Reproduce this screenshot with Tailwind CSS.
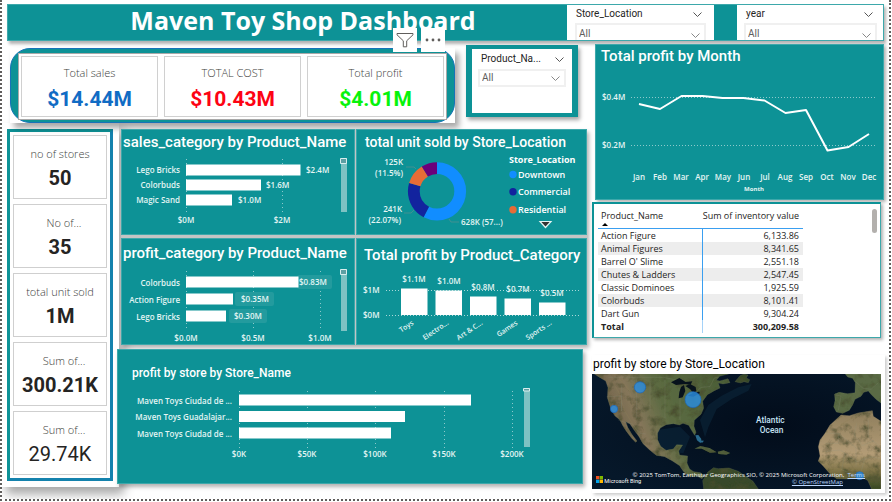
<!DOCTYPE html>
<html lang="en">
<head>
<meta charset="utf-8">
<meta name="viewport" content="width=device-width, initial-scale=1">
<title>Maven Toy Shop Dashboard</title>
<script src="https://cdn.jsdelivr.net/npm/@tailwindcss/browser@4"></script>
</head>
<body class="bg-white font-['Open_Sans','Noto_Sans',sans-serif] text-[#252423]">
<div class="mr-px overflow-hidden border-x-2 border-b-2 border-dotted border-[#605e5c] pt-1 pr-[5px] pb-[6px] pl-[5px]">

  <header class="grid h-[37px] grid-cols-[560fr_147fr_23fr_147fr] bg-[#0d9296] shadow-[2px_3px_3px_rgba(0,0,0,0.3)] outline outline-1 -outline-offset-1 outline-[#3da8ab]">
    <h1 class="min-w-0 truncate pl-[32px] text-center text-[25px] leading-8 font-bold text-white">Maven Toy Shop Dashboard</h1>
    <section class="min-w-0 overflow-hidden border-b border-[#9fd2d3] bg-white px-2 pt-[2px]">
      <div class="flex h-4 items-center justify-between pr-1 pl-px">
        <label for="loc" class="font-['Roboto',sans-serif] text-[10px] leading-4">Store_Location</label>
        <button type="button" aria-label="Clear Store_Location"><svg class="h-[5px] w-[9px]" viewBox="0 0 9 5" fill="none" stroke="#555" stroke-width="1"><path d="M.5.5l4 4 4-4"/></svg></button>
      </div>
      <div class="relative mt-[1px] h-5 border-2 border-b-0 border-[#f0f0f0]">
        <select id="loc" class="block h-[18px] w-full appearance-none pl-[2px] font-['Roboto',sans-serif] text-[10px] leading-[18px] text-[#605e5c]"><option>All</option></select>
        <svg class="pointer-events-none absolute top-2 right-1 h-[5px] w-[9px]" viewBox="0 0 9 5" fill="none" stroke="#888"><path d="M.5.5l4 4 4-4"/></svg>
      </div>
    </section>
    <div></div>
    <section class="min-w-0 overflow-hidden border-b border-[#9fd2d3] bg-white px-[7px] pt-[2px]">
      <div class="flex h-4 items-center justify-between pr-1 pl-[2px]">
        <label for="year" class="font-['Roboto',sans-serif] text-[10px] leading-4">year</label>
        <button type="button" aria-label="Clear year"><svg class="h-[5px] w-[9px]" viewBox="0 0 9 5" fill="none" stroke="#555" stroke-width="1"><path d="M.5.5l4 4 4-4"/></svg></button>
      </div>
      <div class="relative mt-[1px] h-5 border-2 border-b-0 border-[#f0f0f0]">
        <select id="year" class="block h-[18px] w-full appearance-none pl-[2px] font-['Roboto',sans-serif] text-[10px] leading-[18px] text-[#605e5c]"><option>All</option></select>
        <svg class="pointer-events-none absolute top-2 right-1 h-[5px] w-[9px]" viewBox="0 0 9 5" fill="none" stroke="#888"><path d="M.5.5l4 4 4-4"/></svg>
      </div>
    </section>
  </header>

  <main class="grid grid-cols-[580fr_292fr] gap-x-[5px] pt-[3px]">
    <div class="flex min-w-0 flex-col gap-[6px]">
      <div class="grid grid-cols-[445fr_112fr] items-start gap-[11px] pr-[9px] pl-[3px]">
        <section class="relative mt-1 min-w-0 bg-white shadow-[4px_5px_6px_rgba(0,0,0,0.35)]">
          <div class="rounded-[20px] border border-[#1773b8] bg-[#0d9296] px-[7px] pt-1 pb-[2px]">
            <div class="grid grid-cols-3 gap-[6px] border border-[#a9a9a9] bg-white px-[2px] py-[2px]">
              <div class="flex h-[61px] flex-col items-center border border-[#d0d0d0] pt-2"><span class="text-[11px] leading-4 font-light text-[#403e3c]">Total sales</span><span class="mt-[6px] font-['Roboto',sans-serif] text-[21px] leading-6 font-bold text-[#116cc4]">$14.44M</span></div>
              <div class="flex h-[61px] flex-col items-center border border-[#d0d0d0] pt-2"><span class="text-[11px] leading-4 font-light text-[#403e3c]">TOTAL COST</span><span class="mt-[6px] font-['Roboto',sans-serif] text-[21px] leading-6 font-bold text-[#fd0313]">$10.43M</span></div>
              <div class="flex h-[61px] flex-col items-center border border-[#d0d0d0] pt-2"><span class="text-[11px] leading-4 font-light text-[#403e3c]">Total profit</span><span class="mt-[6px] font-['Roboto',sans-serif] text-[21px] leading-6 font-bold text-[#07f30b]">$4.01M</span></div>
            </div>
          </div>
          <div class="absolute -top-[20px] right-[10px] flex gap-1">
            <button type="button" aria-label="Filters" class="flex h-6 w-6 items-center justify-center bg-white"><svg class="h-4 w-[18px]" viewBox="0 0 18 16" fill="none" stroke="#605e5c"><path d="M1 1.500h16v1.300l-6.300 6v6H7.300v-6L1 2.800z"/></svg></button>
            <button type="button" aria-label="More options" class="flex h-6 w-6 items-center justify-center bg-white"><svg class="h-1 w-4" viewBox="0 0 16 4" fill="#605e5c"><circle cx="2" cy="2" r="1.400"/><circle cx="8" cy="2" r="1.400"/><circle cx="14" cy="2" r="1.400"/></svg></button>
          </div>
        </section>
        <section class="mt-px min-w-0 border-x-[6px] border-y-4 border-[#0d9296] bg-white px-[6px] pt-[2px] pb-[26px] shadow-[2px_3px_4px_rgba(0,0,0,0.35)]">
          <div class="flex h-4 items-center justify-between pr-[2px] pl-[3px]">
            <label for="prod" class="font-['Roboto',sans-serif] text-[10px] leading-4">Product_Na...</label>
            <button type="button" aria-label="Clear Product_Name"><svg class="h-[5px] w-[9px]" viewBox="0 0 9 5" fill="none" stroke="#555"><path d="M.5.5l4 4 4-4"/></svg></button>
          </div>
          <div class="relative mt-[2px] h-[18px] border-2 border-[#f0f0f0]">
            <select id="prod" class="block h-[14px] w-full appearance-none pl-[2px] font-['Roboto',sans-serif] text-[10px] leading-[14px] text-[#605e5c]"><option>All</option></select>
            <svg class="pointer-events-none absolute top-[5px] right-1 h-[5px] w-[9px]" viewBox="0 0 9 5" fill="none" stroke="#888"><path d="M.5.5l4 4 4-4"/></svg>
          </div>
        </section>
      </div>

      <div class="grid grid-cols-[106fr_470fr] items-start gap-1">
        <aside class="flex min-w-0 flex-col gap-[5px] border-[3px] border-t-[#0d9296] border-r-[#1482ad] border-b-[#1482ad] border-l-[#0d9296] bg-white px-[3px] pt-[3px] pb-[3px] shadow-[0_0_0_6px_#fff,5px_7px_10px_6px_rgba(0,0,0,0.35)]">
          <div class="flex h-16 flex-col items-center border border-[#cfcfcf] pt-[10px]"><span class="text-[11px] leading-4 font-light text-[#403e3c]">no of stores</span><span class="mt-1 font-['Roboto',sans-serif] text-[20px] leading-6 font-bold">50</span></div>
          <div class="flex h-16 flex-col items-center border border-[#cfcfcf] pt-[10px]"><span class="pl-2 text-[11px] leading-4 font-light text-[#403e3c]">No of...</span><span class="mt-1 font-['Roboto',sans-serif] text-[20px] leading-6 font-bold">35</span></div>
          <div class="flex h-16 flex-col items-center border border-[#cfcfcf] pt-[10px]"><span class="text-[11px] leading-4 font-light text-[#403e3c]">total unit sold</span><span class="mt-1 font-['Roboto',sans-serif] text-[20px] leading-6 font-bold">1M</span></div>
          <div class="flex h-16 flex-col items-center border border-[#cfcfcf] pt-[10px]"><span class="pl-2 text-[11px] leading-4 font-light text-[#403e3c]">Sum of...</span><span class="mt-1 font-['Roboto',sans-serif] text-[20px] leading-6 font-bold">300.21K</span></div>
          <div class="flex h-16 flex-col items-center border border-[#cfcfcf] pt-[10px]"><span class="pl-2 text-[11px] leading-4 font-light text-[#403e3c]">Sum of...</span><span class="mt-1 font-['Roboto',sans-serif] text-[20px] leading-6">29.74K</span></div>
        </aside>

        <div class="relative flex min-w-0 flex-col gap-1">
          <div class="ml-1 grid grid-cols-[234fr_231fr] gap-x-px gap-y-[3px] bg-[#c4c4c4] shadow-[2px_3px_4px_rgba(0,0,0,0.3)]">
            <section class="min-w-0 bg-[#0d9296] outline outline-1 -outline-offset-1 outline-[#3da8ab]">
              <h2 class="h-[26px] truncate pt-[3px] pl-[2px] font-['Roboto',sans-serif] text-[15px] leading-5 font-medium text-white">sales_category by Product_Name</h2>
              <svg class="block w-full font-['Open_Sans','Noto_Sans',sans-serif] text-[8px] font-semibold" viewBox="121 155 234 80" fill="#e4f5f4">
                <g stroke="#8cc9cb" stroke-dasharray="1 3"><path d="M186.500 159v54M282.500 159v54"/></g>
                <g fill="#fff"><path d="M186 164.500h114.500v11H186zM186 179.500h75v11h-75zM186 194.500h46v11h-46z"/></g>
                <g text-anchor="end"><text x="180" y="173">Lego Bricks</text><text x="180" y="188">Colorbuds</text><text x="180" y="203">Magic Sand</text></g>
                <text x="306" y="173">$2.4M</text><text x="266" y="188">$1.6M</text><text x="238" y="203">$1.0M</text>
                <g text-anchor="middle"><text x="186" y="223">$0M</text><text x="282" y="223">$2M</text></g>
                <path fill="#7ec2c3" d="M341 158h6v54h-6z"/><path fill="#5d9fa3" stroke="#d8eeee" d="M340.500 158.500h6v5h-6z"/>
              </svg>
            </section>
            <section class="min-w-0 bg-[#0d9296] outline outline-1 -outline-offset-1 outline-[#3da8ab]">
              <h2 class="h-[26px] truncate pt-[3px] pl-[9px] font-['Roboto',sans-serif] text-[14px] leading-5 font-medium text-white">total unit sold by Store_Location</h2>
              <svg class="block w-full font-['Open_Sans','Noto_Sans',sans-serif] text-[8px] font-semibold" viewBox="356 155 231 80" fill="#e4f5f4">
                <g fill="none" stroke-width="11.800" transform="rotate(-90 437 191.300)">
                  <circle cx="437" cy="191.300" r="23.200" pathLength="100" stroke="#118dff" stroke-dasharray="57.650 100"/>
                  <circle cx="437" cy="191.300" r="23.200" pathLength="100" stroke="#12239e" stroke-dasharray="22.070 100" stroke-dashoffset="-57.650"/>
                  <circle cx="437" cy="191.300" r="23.200" pathLength="100" stroke="#e66c37" stroke-dasharray="11.500 100" stroke-dashoffset="-79.720"/>
                  <circle cx="437" cy="191.300" r="23.200" pathLength="100" stroke="#6b007b" stroke-dasharray="8.780 100" stroke-dashoffset="-91.220"/>
                </g>
                <path fill="none" stroke="#5a8f90" stroke-width=".7" d="M406 167h8l2 2M404 213h7l3-3M449 219l2 3h8"/>
                <g text-anchor="end"><text x="403" y="165">125K</text><text x="403" y="176">(11.5%)</text><text x="402" y="212">241K</text><text x="401" y="223">(22.07%)</text></g>
                <text x="461" y="225">628K (57...)</text>
                <g class="text-[9px]" fill="#fff"><text x="509" y="163" class="font-bold">Store_Location</text><text x="518" y="178">Downtown</text><text x="518" y="195">Commercial</text><text x="518" y="213">Residential</text></g>
                <circle cx="513" cy="174.500" r="3.700" fill="#118dff"/><circle cx="513" cy="191.700" r="3.700" fill="#12239e"/><circle cx="513" cy="209.700" r="3.700" fill="#e66c37"/>
                <path d="M540 221.500h11l-5.500 6z" fill="#333" stroke="#e4f5f4" stroke-width="1.200"/>
              </svg>
            </section>
            <section class="min-w-0 bg-[#0d9296] outline outline-1 -outline-offset-1 outline-[#3da8ab]">
              <h2 class="h-[27px] truncate pt-[5px] pl-[2px] font-['Roboto',sans-serif] text-[15px] leading-5 font-medium text-white">profit_category by Product_Name</h2>
              <svg class="block w-full font-['Open_Sans','Noto_Sans',sans-serif] text-[8px] font-semibold" viewBox="121 265 234 80" fill="#e4f5f4">
                <g stroke="#8cc9cb" stroke-dasharray="1 3"><path d="M186.500 271v60M253.500 271v60M320.500 271v60"/></g>
                <g fill="#239b9e"><rect x="297" y="275" width="35" height="14" rx="2"/><rect x="235" y="292" width="39" height="14" rx="2"/><rect x="229" y="309" width="38" height="14" rx="2"/></g>
                <g fill="#fff"><path d="M186 276.500h112.500v11H186zM186 293.500h47v11h-47zM186 310.500h40v11h-40z"/></g>
                <g text-anchor="end"><text x="180" y="286">Colorbuds</text><text x="180" y="303">Action Figure</text><text x="180" y="320">Lego Bricks</text></g>
                <text x="299" y="285">$0.83M</text><text x="241" y="302">$0.35M</text><text x="234" y="319">$0.30M</text>
                <g text-anchor="middle"><text x="186" y="341">$0.0M</text><text x="253" y="341">$0.5M</text><text x="320" y="341">$1.0M</text></g>
                <path fill="#7ec2c3" d="M341 269h6v62h-6z"/><path fill="#5d9fa3" stroke="#d8eeee" d="M340.500 269.500h6v5h-6z"/>
              </svg>
            </section>
            <section class="min-w-0 bg-[#0d9296] outline outline-1 -outline-offset-1 outline-[#3da8ab]">
              <h2 class="h-[27px] truncate pt-[7px] pl-[8px] font-['Roboto',sans-serif] text-[15px] leading-5 font-medium text-white">Total profit by Product_Category</h2>
              <svg class="block w-full font-['Open_Sans','Noto_Sans',sans-serif] text-[8px] font-semibold" viewBox="356 265 231 80" fill="#e4f5f4">
                <g stroke="#a9d8d9" stroke-dasharray="1 2"><path d="M386 290.500h193M386 315.500h193"/></g>
                <path fill="#fff" d="M401 288.500h26.500V315H401zM435.500 290.500H462V315h-26.500zM470 296.500h26.500V315H470zM504.500 298.500H531V315h-26.500zM539 302.500h26.500V315H539z"/>
                <text x="363" y="293">$1M</text><text x="363" y="318">$0M</text>
                <g text-anchor="middle"><text x="414" y="282">$1.1M</text><text x="449" y="284">$1.0M</text><text x="483" y="290">$0.8M</text><text x="518" y="292">$0.7M</text><text x="552" y="296">$0.5M</text></g>
                <g text-anchor="end" class="text-[7px]"><text transform="translate(414 324) rotate(-34)">Toys</text><text transform="translate(449 324) rotate(-34)">Electro...</text><text transform="translate(483 324) rotate(-34)">Art &amp; C...</text><text transform="translate(518 324) rotate(-34)">Games</text><text transform="translate(552 324) rotate(-34)">Sports ...</text></g>
              </svg>
            </section>
          </div>
          <section class="mr-1 bg-[#0d9296] shadow-[2px_3px_4px_rgba(0,0,0,0.3)] outline outline-1 -outline-offset-1 outline-[#3da8ab]">
            <h2 class="h-[35px] truncate pt-[14px] pl-[15px] font-['Roboto',sans-serif] text-[12px] leading-5 font-medium text-white">profit by store by Store_Name</h2>
            <svg class="block w-full font-['Open_Sans','Noto_Sans',sans-serif] text-[8px] font-semibold" viewBox="117 384 466 100" fill="#e4f5f4">
              <g stroke="#8cc9cb" stroke-dasharray="1 3"><path d="M239.500 391v57M307.500 391v57M375.500 391v57M444.500 391v57M512.500 391v57"/></g>
              <path fill="#fff" d="M239 394.500h232v11H239zM239 411h166v11H239zM239 427.500h152v11H239z"/>
              <g text-anchor="end"><text x="232" y="404">Maven Toys Ciudad de ...</text><text x="232" y="420">Maven Toys Guadalajar...</text><text x="232" y="437">Maven Toys Ciudad de ...</text></g>
              <g text-anchor="middle"><text x="239" y="457">$0K</text><text x="307" y="457">$50K</text><text x="375" y="457">$100K</text><text x="444" y="457">$150K</text><text x="512" y="457">$200K</text></g>
              <path fill="#7ec2c3" d="M524 388h6v59h-6z"/><path fill="#5d9fa3" stroke="#d8eeee" d="M523.500 388.500h6v2.500h-6z"/>
            </svg>
          </section>
        </div>
      </div>
    </div>

    <div class="flex min-w-0 flex-col">
      <section class="ml-[3px] bg-[#0d9296] shadow-[2px_2px_3px_rgba(0,0,0,0.3)] outline outline-1 -outline-offset-1 outline-[#3da8ab]">
        <h2 class="h-6 truncate pt-[2px] pl-[6px] font-['Roboto',sans-serif] text-[15px] leading-5 font-medium text-white">Total profit by Month</h2>
        <svg class="block w-full font-['Open_Sans','Noto_Sans',sans-serif] text-[8px] font-semibold" viewBox="595 68 289 132" fill="#e4f5f4">
          <g stroke="#8cc9cb" stroke-dasharray="1 2"><path d="M631 97.500h245M631 145.500h245"/></g>
          <path fill="none" stroke="#fff" stroke-width="2" stroke-linejoin="round" d="M639 104l21 5 21.500-13h21l20 2h21l21 2.500 21 12.500 20.500-3 21.500 40.500 21-3.500 20.500-13"/>
          <text x="602" y="100">$0.4M</text><text x="602" y="148">$0.2M</text>
          <g text-anchor="middle"><text x="639" y="180">Jan</text><text x="660" y="180">Feb</text><text x="681" y="180">Mar</text><text x="702" y="180">Apr</text><text x="723" y="180">May</text><text x="744" y="180">Jun</text><text x="765" y="180">Jul</text><text x="785" y="180">Aug</text><text x="806" y="180">Sep</text><text x="827" y="180">Oct</text><text x="848" y="180">Nov</text><text x="869" y="180">Dec</text><text x="754" y="191" class="text-[6px] font-bold">Month</text></g>
        </svg>
      </section>

      <section class="relative mt-[2px] mr-[3px] border border-t-2 border-l-2 border-[#3da8ab] border-t-[#0d9296] border-l-[#0d9296] bg-white pt-[6px] pr-[77px] pb-1 pl-1 shadow-[2px_2px_3px_rgba(0,0,0,0.3)]">
        <table class="w-full border-collapse text-[9px]">
          <thead>
            <tr class="h-[18px] border-b border-[#3a9ff0] align-top"><th scope="col" class="relative w-[104px] pl-[3px] text-left leading-3 font-normal">Product_Name<svg class="absolute top-[13px] left-1 h-[3px] w-[6px]" viewBox="0 0 6 3"><path d="M0 3h6L3 0z"/></svg></th><th scope="col" class="pr-1 text-right leading-3 font-normal whitespace-nowrap">Sum of inventory value</th></tr>
          </thead>
          <tbody class="leading-[13px]">
            <tr class="h-[14px]"><td class="border-r border-[#3a9ff0] pl-[3px]">Action Figure</td><td class="pr-1 text-right">6,133.86</td></tr>
            <tr class="bg-[#ededed]"><td class="border-r border-[#3a9ff0] pl-[3px]">Animal Figures</td><td class="pr-1 text-right">8,341.65</td></tr>
            <tr><td class="border-r border-[#3a9ff0] pl-[3px]">Barrel O' Slime</td><td class="pr-1 text-right">2,551.18</td></tr>
            <tr class="bg-[#ededed]"><td class="border-r border-[#3a9ff0] pl-[3px]">Chutes &amp; Ladders</td><td class="pr-1 text-right">2,547.45</td></tr>
            <tr><td class="border-r border-[#3a9ff0] pl-[3px]">Classic Dominoes</td><td class="pr-1 text-right">1,925.59</td></tr>
            <tr class="bg-[#ededed]"><td class="border-r border-[#3a9ff0] pl-[3px]">Colorbuds</td><td class="pr-1 text-right">8,101.41</td></tr>
            <tr><td class="border-r border-[#3a9ff0] pl-[3px]">Dart Gun</td><td class="pr-1 text-right">9,304.24</td></tr>
          </tbody>
          <tfoot class="leading-[13px] font-bold">
            <tr><td class="border-r border-[#a5d2f8] pl-[3px]">Total</td><td class="pr-1 text-right">300,209.58</td></tr>
          </tfoot>
        </table>
        <div class="absolute top-[5px] right-[3px] h-6 w-[5px] rounded-full bg-[#b3b0ad]"></div>
      </section>

      <section class="mt-[17px] mr-[-1px] bg-white pr-1 pb-1 shadow-[2px_2px_3px_rgba(0,0,0,0.2)]">
        <h2 class="h-[19px] truncate pl-px font-['Roboto',sans-serif] text-[12px] leading-[18px] font-normal text-black">profit by store by Store_Location</h2>
        <div class="relative">
          <svg class="block w-full" viewBox="21 72 867 345" role="img" aria-label="Satellite map of profit by store location">
            <defs>
              <filter id="terrain" x="0" y="0" width="100%" height="100%">
                <feTurbulence type="fractalNoise" baseFrequency="0.035" numOctaves="4" seed="8" result="n"/>
                <feColorMatrix in="n" type="matrix" values="0 0 0 0 0.07  0 0 0 0 0.08  0 0 0 0 0.03  2.400 0 0 0 -1.100" result="s"/>
                <feComposite in="s" in2="SourceAlpha" operator="in" result="t"/>
                <feMerge><feMergeNode in="SourceGraphic"/><feMergeNode in="t"/></feMerge>
              </filter>
              <linearGradient id="na" x1="0" x2="1" y1="0.300" y2="0"><stop offset="0" stop-color="#6b5f45"/><stop offset=".25" stop-color="#85765a"/><stop offset=".45" stop-color="#5c6b42"/><stop offset="1" stop-color="#485b35"/></linearGradient>
              <linearGradient id="af" x1="0" x2="0" y1="0" y2="1"><stop offset="0" stop-color="#8d7d5c"/><stop offset=".55" stop-color="#b39c76"/><stop offset=".78" stop-color="#7d7246"/><stop offset="1" stop-color="#354722"/></linearGradient>
              <radialGradient id="sea" cx=".62" cy=".45" r=".7"><stop offset="0" stop-color="#020c1a"/><stop offset="1" stop-color="#06182a"/></radialGradient>
            </defs>
            <path fill="url(#sea)" d="M21 72h867v345H21z"/>
            <path fill="#0b263b" opacity=".6" d="M345 210l25-45 40-28 50-25 40-10-10 20-50 25-45 30-25 55-10 30zM215 240l70-10 30 30-20 50-70-10z"/>
            <g filter="url(#terrain)">
              <path fill="url(#na)" stroke="#67745a" stroke-width=".8" d="M28 72l14 9 20 12 7 20-2 30 7 22 5 15 11 18 15 12 7 15 13 20 15 20 12 12 4-4-16-21-11-19-7-18 12 6 14 20 14 19 12 21 20 19 20 16 25 4 22 12 23 15 12 18 20 15 20-2 15 8 7-9-12-9-20-3-12-8-8-18 2-21-24-3-3-12 12-18-18-1-10 13-22 4-16-12-9-20v-20l8-15 17-10 22-3 18 4 11-5 17 6 10 17 8 13 4-9-6-18 1-18 20-18 8-18-3-21 14-20 21-12 17-8-5-15 14 3 21-4-6-12-25 7-10-2 10-12 30-8 15-6z"/>
              <path fill="#37482a" stroke="#67745a" stroke-width=".8" d="M450 95l15-18 12-5 12 3-5 9 10 5-4 9-13-3-10 4zM356 417l-3-25 15-25 18-14 14 3 32-2 28 10 18 12 26 18 16 23z"/>
              <path fill="#5a6b44" stroke="#748063" stroke-width=".8" d="M781 72l7 9 15 4 8 13-1 30-22 3-25-4-14 5 1 20-4 18 8 16 19 4 20-9 10-17 7-16 18-9 8-12 14-4 8 10 15 15 15 11V72z"/>
              <path fill="url(#af)" stroke="#988969" stroke-width=".8" d="M768 195l25 2 27-8 42-7 3 17 23 15v203h-28l-12-26-18-10-42 6-33-1-20-15-20-22-15-16 5-15-5-28 5-20 15-20 15-25 20-18z"/>
              <path fill="#52603c" d="M328 296l18-8 28 6 21 13-20 1-25-12zM398 305l18-4 20 8-12 5-24-2z"/>
            </g>
            <g fill="none" stroke="#90947d" stroke-width="1" opacity=".6">
              <path d="M70 82h165l40 8 12 8M328 132l20-20 27-2 13-26 10-2M100 210l22 8 18 3 25 28 18 3M65 140l45-2v45M110 105v78M155 85v120M195 92v90M240 90v115M285 120v90M724 250h37v30h-40M761 250l52 44v56M815 220l-8 35 25 32 35-15M850 210v53l38 28M721 304l45-4 50 35 45-15 27 7M780 310l-10 50 38 12M840 322l-15 55M812 95l22 20 24 3 22-20M752 135l16 3-8 43"/>
            </g>
            <g fill="#07121c"><path d="M258 97l25-13 19 12 20-2-5 10-18-2-26 3zM288 111l9-6 4 18-8 19-12 3 2-19zM301 108l14-6 17 9 2 13-10 4-9-11zM308 137l16-8 18-4 3 4-20 11z"/></g>
            <path fill="#3b92bd" opacity=".7" d="M331 256l9-1 9 12-2 13-11-9zM343 271l14 1-6 7z"/>
            <g fill="none" stroke="#8d8057" stroke-width="3" opacity=".3"><path d="M82 95l22 36 14 50 25 41 23 35M102 86l32 35 10 45M720 338l56-12 80 8M825 193l-48 24-25 26"/></g>
            <g fill="#2b8de0" fill-opacity=".82" stroke="#1b66bb" stroke-width="2"><circle cx="165" cy="112" r="17"/><circle cx="324" cy="149" r="24"/><circle cx="87" cy="177" r="11"/><circle cx="824" cy="377" r="12"/></g>
            <g fill="#c6e3f3" class="font-['Roboto',sans-serif] text-[25px] font-medium" text-anchor="middle"><text x="556" y="218">Atlantic</text><text x="560" y="248">Ocean</text></g>
            <path fill="#f25022" d="M33 378h10v10H33z"/><path fill="#7fba00" d="M44 378h10v10H44z"/><path fill="#00a4ef" d="M33 389h10v10H33z"/><path fill="#ffb900" d="M44 389h10v10H44z"/>
            <text x="58" y="400" fill="#fff" class="font-['Roboto',sans-serif] text-[17px]">Microsoft Bing</text>
          </svg>
          <p class="absolute right-[16px] bottom-[3px] text-right font-['Open_Sans','Noto_Sans',sans-serif] text-[6px] leading-[7px] whitespace-nowrap text-white">© 2025 TomTom, Earthstar Geographics SIO, © 2025 Microsoft Corporation, &nbsp;<a href="#" class="text-[#b9d6ff] underline">Terms</a><br><a href="#" class="mr-[22px] text-[#b9d6ff] underline">© OpenStreetMap</a></p>
        </div>
      </section>
    </div>
  </main>
</div>
</body>
</html>
